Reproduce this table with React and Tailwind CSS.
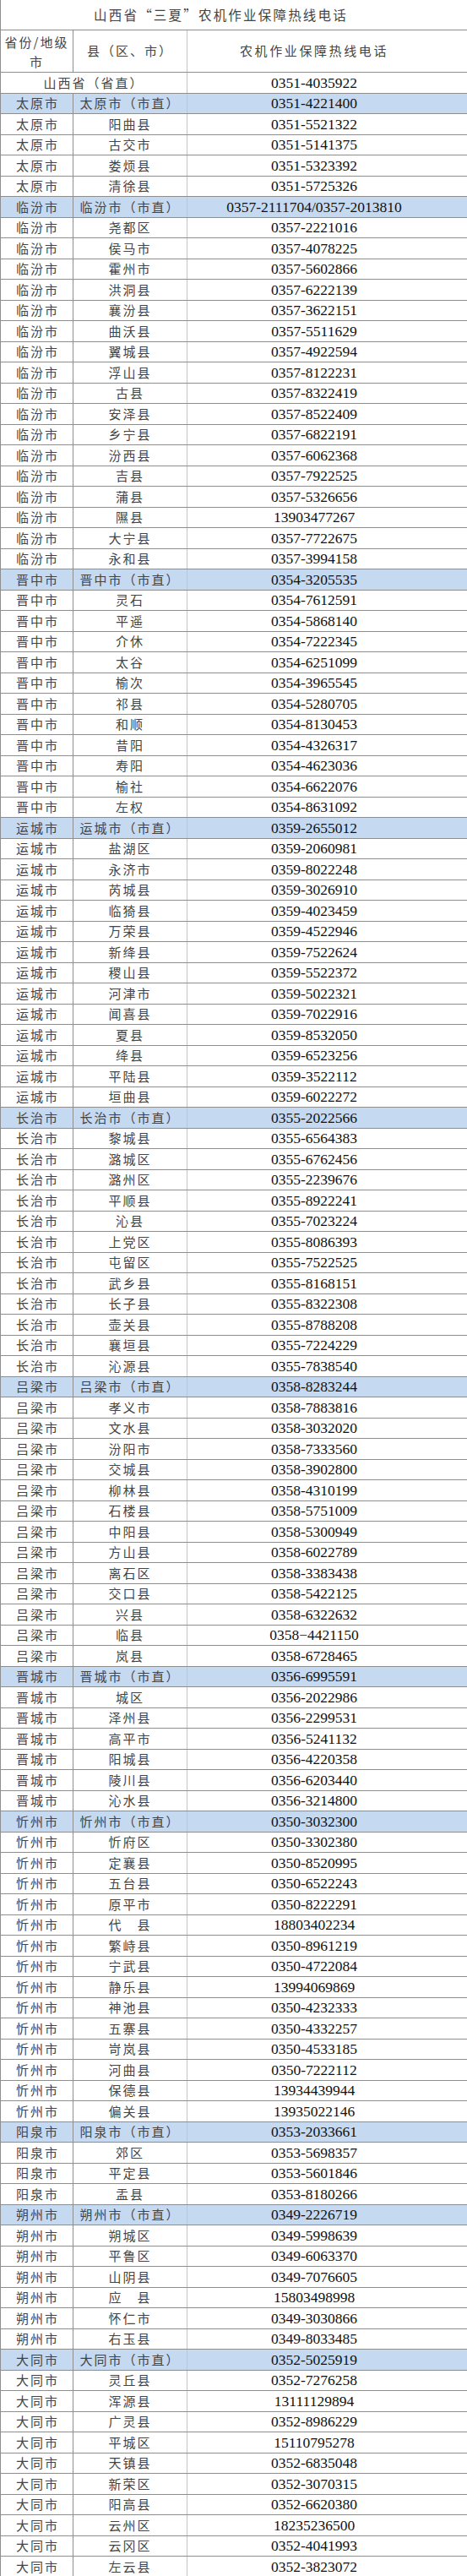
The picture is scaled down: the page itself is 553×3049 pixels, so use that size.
const cjk = "font-['Noto_Sans_CJK_SC',sans-serif] text-[#444]";
const num = "font-['Liberation_Serif',serif] text-[#111] text-[17.5px]";

const groups = [
  ["太原市", "0351-4221400", [
    ["阳曲县", "0351-5521322"], ["古交市", "0351-5141375"], ["娄烦县", "0351-5323392"], ["清徐县", "0351-5725326"],
  ]],
  ["临汾市", "0357-2111704/0357-2013810", [
    ["尧都区", "0357-2221016"], ["侯马市", "0357-4078225"], ["霍州市", "0357-5602866"], ["洪洞县", "0357-6222139"],
    ["襄汾县", "0357-3622151"], ["曲沃县", "0357-5511629"], ["翼城县", "0357-4922594"], ["浮山县", "0357-8122231"],
    ["古县", "0357-8322419"], ["安泽县", "0357-8522409"], ["乡宁县", "0357-6822191"], ["汾西县", "0357-6062368"],
    ["吉县", "0357-7922525"], ["蒲县", "0357-5326656"], ["隰县", "13903477267"], ["大宁县", "0357-7722675"],
    ["永和县", "0357-3994158"],
  ]],
  ["晋中市", "0354-3205535", [
    ["灵石", "0354-7612591"], ["平遥", "0354-5868140"], ["介休", "0354-7222345"], ["太谷", "0354-6251099"],
    ["榆次", "0354-3965545"], ["祁县", "0354-5280705"], ["和顺", "0354-8130453"], ["昔阳", "0354-4326317"],
    ["寿阳", "0354-4623036"], ["榆社", "0354-6622076"], ["左权", "0354-8631092"],
  ]],
  ["运城市", "0359-2655012", [
    ["盐湖区", "0359-2060981"], ["永济市", "0359-8022248"], ["芮城县", "0359-3026910"], ["临猗县", "0359-4023459"],
    ["万荣县", "0359-4522946"], ["新绛县", "0359-7522624"], ["稷山县", "0359-5522372"], ["河津市", "0359-5022321"],
    ["闻喜县", "0359-7022916"], ["夏县", "0359-8532050"], ["绛县", "0359-6523256"], ["平陆县", "0359-3522112"],
    ["垣曲县", "0359-6022272"],
  ]],
  ["长治市", "0355-2022566", [
    ["黎城县", "0355-6564383"], ["潞城区", "0355-6762456"], ["潞州区", "0355-2239676"], ["平顺县", "0355-8922241"],
    ["沁县", "0355-7023224"], ["上党区", "0355-8086393"], ["屯留区", "0355-7522525"], ["武乡县", "0355-8168151"],
    ["长子县", "0355-8322308"], ["壶关县", "0355-8788208"], ["襄垣县", "0355-7224229"], ["沁源县", "0355-7838540"],
  ]],
  ["吕梁市", "0358-8283244", [
    ["孝义市", "0358-7883816"], ["文水县", "0358-3032020"], ["汾阳市", "0358-7333560"], ["交城县", "0358-3902800"],
    ["柳林县", "0358-4310199"], ["石楼县", "0358-5751009"], ["中阳县", "0358-5300949"], ["方山县", "0358-6022789"],
    ["离石区", "0358-3383438"], ["交口县", "0358-5422125"], ["兴县", "0358-6322632"], ["临县", "0358−4421150"],
    ["岚县", "0358-6728465"],
  ]],
  ["晋城市", "0356-6995591", [
    ["城区", "0356-2022986"], ["泽州县", "0356-2299531"], ["高平市", "0356-5241132"], ["阳城县", "0356-4220358"],
    ["陵川县", "0356-6203440"], ["沁水县", "0356-3214800"],
  ]],
  ["忻州市", "0350-3032300", [
    ["忻府区", "0350-3302380"], ["定襄县", "0350-8520995"], ["五台县", "0350-6522243"], ["原平市", "0350-8222291"],
    ["代\u3000县", "18803402234"], ["繁峙县", "0350-8961219"], ["宁武县", "0350-4722084"], ["静乐县", "13994069869"],
    ["神池县", "0350-4232333"], ["五寨县", "0350-4332257"], ["岢岚县", "0350-4533185"], ["河曲县", "0350-7222112"],
    ["保德县", "13934439944"], ["偏关县", "13935022146"],
  ]],
  ["阳泉市", "0353-2033661", [
    ["郊区", "0353-5698357"], ["平定县", "0353-5601846"], ["盂县", "0353-8180266"],
  ]],
  ["朔州市", "0349-2226719", [
    ["朔城区", "0349-5998639"], ["平鲁区", "0349-6063370"], ["山阴县", "0349-7076605"], ["应\u3000县", "15803498998"],
    ["怀仁市", "0349-3030866"], ["右玉县", "0349-8033485"],
  ]],
  ["大同市", "0352-5025919", [
    ["灵丘县", "0352-7276258"], ["浑源县", "13111129894"], ["广灵县", "0352-8986229"], ["平城区", "15110795278"],
    ["天镇县", "0352-6835048"], ["新荣区", "0352-3070315"], ["阳高县", "0352-6620380"], ["云州区", "18235236500"],
    ["云冈区", "0352-4041993"], ["左云县", "0352-3823072"],
  ]],
];

function Row({ city, district, phone, blue }) {
  return (
    <div className={`flex h-[24.5px] border-b border-[#8e8e8e] ${blue ? "bg-[#c5d9f1]" : "bg-white"}`}>
      <div className={`${cjk} w-[86px] shrink-0 border-r border-[#8e8e8e] flex items-center justify-center text-[15px] tracking-[2px] pl-[2px]`}>
        {city}
      </div>
      <div className={`${cjk} w-[135px] shrink-0 border-r border-[#c4c4c4] flex items-center justify-center text-[15px] tracking-[2px] whitespace-nowrap`}>
        {district}
      </div>
      <div className={`${num} flex-1 flex items-center justify-center pr-[31px] whitespace-nowrap`}>
        {phone}
      </div>
    </div>
  );
}

export default function App() {
  return (
    <div className="w-[553px] bg-white border-l border-[#8e8e8e]">
      <div className={`${cjk} h-[36px] border-b border-[#8e8e8e] flex items-center justify-center pr-[31px] text-[15.5px] tracking-[2.2px]`}>
        山西省“三夏”农机作业保障热线电话
      </div>
      <div className="flex h-[50px] border-b border-[#8e8e8e]">
        <div className={`${cjk} w-[86px] shrink-0 border-r border-[#8e8e8e] flex items-center justify-center text-center text-[15px] tracking-[2px] leading-[23px]`}>
          省份/地级<br />市
        </div>
        <div className={`${cjk} w-[135px] shrink-0 border-r border-[#c4c4c4] flex items-center justify-center text-[15px] tracking-[2px]`}>
          县（区、市）
        </div>
        <div className={`${cjk} flex-1 flex items-center justify-center pr-[31px] text-[15px] tracking-[2.6px]`}>
          农机作业保障热线电话
        </div>
      </div>
      <div className="flex h-[24.5px] border-b border-[#8e8e8e]">
        <div className={`${cjk} w-[221px] shrink-0 border-r border-[#c4c4c4] flex items-center justify-center text-[15px] tracking-[2px]`}>
          山西省（省直）
        </div>
        <div className={`${num} flex-1 flex items-center justify-center pr-[31px]`}>0351-4035922</div>
      </div>
      {groups.map(([city, main, rows]) => (
        <div key={city}>
          <Row city={city} district={`${city}（市直）`} phone={main} blue />
          {rows.map(([d, p]) => (
            <Row key={d} city={city} district={d} phone={p} />
          ))}
        </div>
      ))}
    </div>
  );
}
